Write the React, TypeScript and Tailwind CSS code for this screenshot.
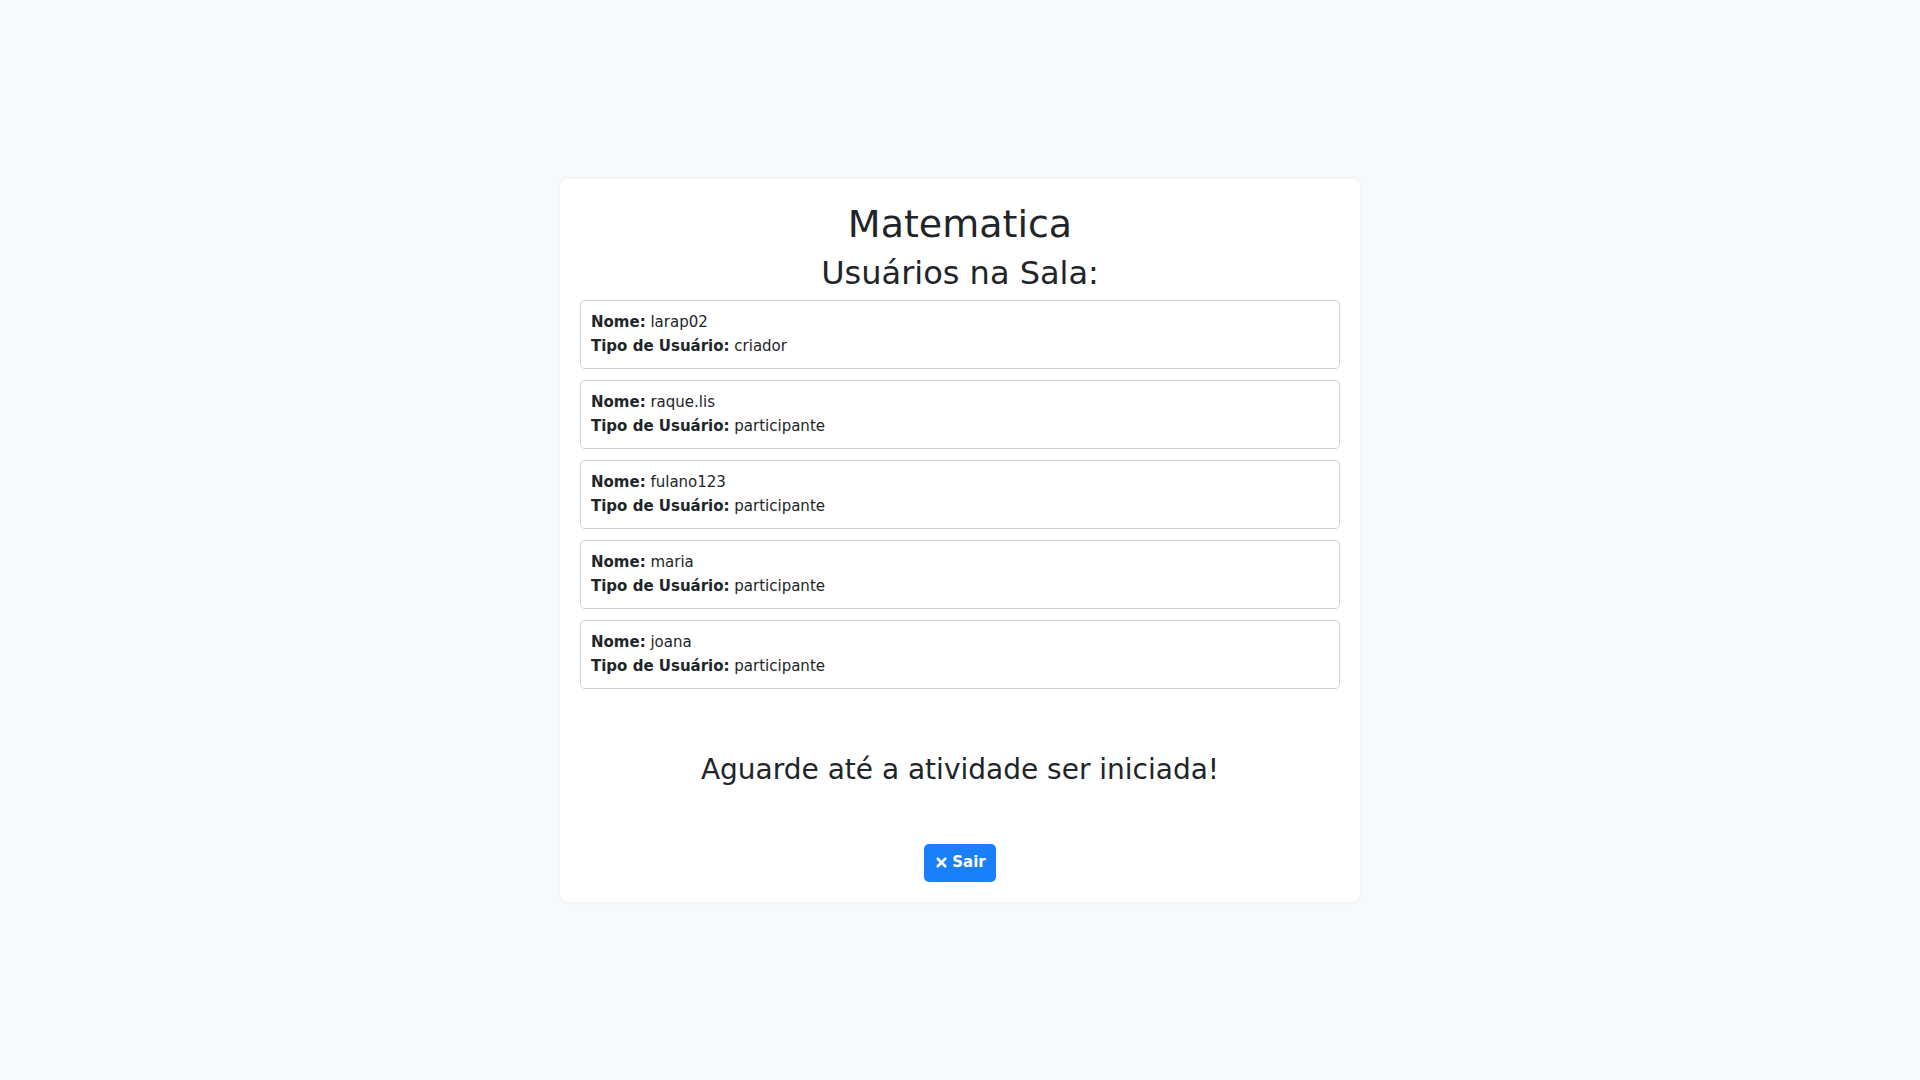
import { X } from "lucide-react";

type Usuario = { nome: string; tipo: string };

const usuarios: Usuario[] = [
	{ nome: "larap02", tipo: "criador" },
	{ nome: "raque.lis", tipo: "participante" },
	{ nome: "fulano123", tipo: "participante" },
	{ nome: "maria", tipo: "participante" },
	{ nome: "joana", tipo: "participante" },
];

function UsuarioItem({ usuario }: { usuario: Usuario }) {
	return (
		<li className="border border-[#cfd1d4] rounded-[5px] px-[10px] py-[9.5px] text-[15px] leading-[24px]">
			<div>
				<span className="font-bold">Nome:</span> {usuario.nome}
			</div>
			<div>
				<span className="font-bold">Tipo de Usuário:</span> {usuario.tipo}
			</div>
		</li>
	);
}

export default function App() {
	return (
		<div
			className="min-h-screen bg-[#f8f9fa] flex items-center justify-center text-[#212529]"
			style={{ fontFamily: '"DejaVu Sans", "Noto Sans", sans-serif' }}
		>
			<div className="w-[800px] bg-white rounded-[8px] shadow-[0_0_4px_rgba(0,0,0,0.06)] p-[20px] flex flex-col items-center">
				<h1 className="text-[38px] leading-[46px] mt-[2px] mb-[7px]">Matematica</h1>
				<h2 className="text-[32px] leading-[38px] mb-[8px]">Usuários na Sala:</h2>
				<ul className="w-full flex flex-col gap-[11px]">
					{usuarios.map((u) => (
						<UsuarioItem key={u.nome} usuario={u} />
					))}
				</ul>
				<h3 className="text-[28px] leading-[34px] mt-[64px] mb-[57px]">
					Aguarde até a atividade ser iniciada!
				</h3>
				<button className="h-[38px] px-[10px] rounded-[5px] bg-[#1a7ffb] text-white font-bold text-[15px] flex items-center gap-[3px]">
					<X size={15} strokeWidth={4} />
					Sair
				</button>
			</div>
		</div>
	);
}
